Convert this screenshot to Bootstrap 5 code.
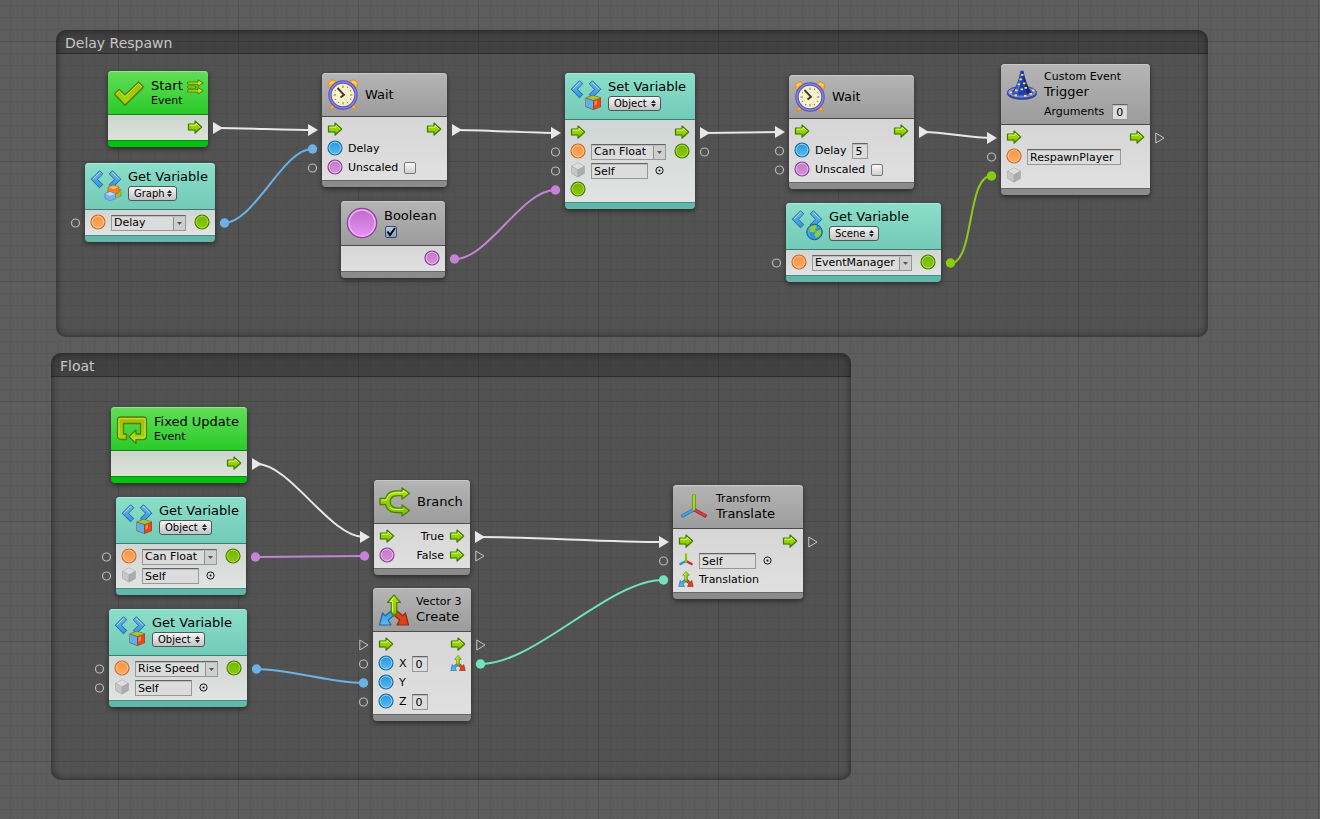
<!DOCTYPE html>
<html lang="en">
<head>
<meta charset="utf-8">
<meta name="viewport" content="width=device-width, initial-scale=1">
<title>Flow graph</title>
<link rel="stylesheet" href="https://cdn.jsdelivr.net/npm/bootstrap@5.3.0/dist/css/bootstrap.min.css">
<style>
  body { font-family: "DejaVu Sans", sans-serif; font-size: 11px; line-height: 16px; color: #000; background: #5d5d5d; }

  /* canvas with a 12px grid and a heavier line every 120px */
  .graph-canvas {
    min-height: 100vh;
    background-color: #5d5d5d;
    background-image:
      linear-gradient(90deg, #515151 1px, transparent 1px),
      linear-gradient(#515151 1px, transparent 1px),
      linear-gradient(90deg, #585858 1px, transparent 1px),
      linear-gradient(#585858 1px, transparent 1px);
    background-size: 120px 120px, 120px 120px, 12px 12px, 12px 12px;
    background-position: 118px 41px, 118px 41px, 10px 5px, 10px 5px;
  }
  .wire-layer { inset: 0; pointer-events: none; }

  .graph-group { border-radius: 10px; background: rgba(0,0,0,.11); box-shadow: inset 0 0 7px 1px rgba(0,0,0,.45); overflow: hidden; }
  .graph-group h2 { height: 24px; padding: 1px 9px 0; font-size: 14px; line-height: 24px; color: #c6c6c6; background: rgba(0,0,0,.2); border-bottom: 1px solid rgba(0,0,0,.3); }
  #g-delay { left: 56px; top: 30px; width: 1152px; height: 307px; }
  #g-float { left: 51px; top: 353px; width: 800px; height: 427px; }

  /* nodes */
  .unit { position: absolute; border: 0; border-radius: 4px; box-shadow: 0 2px 5px rgba(0,0,0,.5); background: none; color: #000;
    --h1: #b5b5b5; --h2: #9c9c9c; --hl: #c9c9c9; --ln: #4b4b4b; --b1: #d6d6d6; --b2: #e0e0e0; --f: #8b8b8b; --fl: #686868; }
  .unit-teal { --h1: #8bdfca; --h2: #73cab8; --hl: #a5ead9; --ln: #3a7d71; --b1: #d0d6d4; --b2: #e0e4e3; --f: #63b6aa; --fl: #468f85; }
  .unit-green { --h1: #62dd58; --h2: #2acb2a; --hl: #8bea83; --ln: #1c7d1c; --b1: #cdd6cd; --b2: #dbe3db; --f: #05c20c; --fl: #07900b; }
  .unit .card-header { min-height: 44px; padding: 0 5px; display: flex; align-items: center; gap: 6px; border: 0; border-bottom: 1px solid var(--ln); border-radius: 4px 4px 0 0;
    background: linear-gradient(var(--h1), var(--h2)); box-shadow: inset 0 1px 0 var(--hl); }
  .unit .card-header.with-scope { min-height: 47px; padding-bottom: 2px; }
  .unit .card-header.with-value { min-height: 45px; }
  .unit .card-header.with-args { min-height: 61px; align-items: flex-start; padding-top: 6px; }
  .unit .card-body { padding: 3px 5px 4px; display: grid; gap: 1px; background: linear-gradient(var(--b1), var(--b2)); }
  .unit .card-footer { height: 7px; padding: 0; border: 0; border-top: 1px solid var(--fl); border-radius: 0 0 4px 4px; background: var(--f); }
  .unit h3 { margin: 0; font-size: 13px; line-height: 16px; font-weight: 400; }
  .unit .sub-title { font-size: 11px; line-height: 14px; margin: 0; }
  .slot { display: flex; align-items: center; gap: 5px; height: 18px; white-space: nowrap; }
  .slot label, .slot span { line-height: 18px; padding-top: 1px; }
  .pin { width: 16px; height: 16px; flex: none; }
  .unit-icon { width: 32px; height: 32px; flex: none; overflow: visible; }
  .multi-icon { width: 17px; height: 16px; }

  .field { height: 16px; margin-top: 2px; padding: 0 2px; border: 1px solid #989898; border-top-color: #636363; border-radius: 0; background: #dcdcdc; box-shadow: inset 0 1px 0 #bdbdbd; font-size: 11px; line-height: 14px; color: #000; }
  .field-digit { width: 16px; padding: 0 3px; }
  .field-self { width: 57px; }
  .field-event { width: 94px; }
  select.field { width: 75px; appearance: none; padding-right: 14px;
    background: url("data:image/svg+xml,%3Csvg xmlns='http://www.w3.org/2000/svg' width='12' height='14'%3E%3Crect width='12' height='14' fill='%23cfcfcf'/%3E%3Crect width='1' height='14' fill='%238f8f8f'/%3E%3Cpath d='M4 6h5L6.500 9z' fill='%23555'/%3E%3C/svg%3E") right top / 12px 14px no-repeat #dcdcdc; }
  select.field-rise { width: 83px; }
  select.field-manager { width: 100px; }
  .scope { height: 15px; width: 53px; margin-top: 1px; padding: 0 0 0 5px; appearance: none; border: 1px solid #4a5b58; border-radius: 3px; font-size: 10px; line-height: 13px; color: #000;
    background: url("data:image/svg+xml,%3Csvg xmlns='http://www.w3.org/2000/svg' width='5' height='7'%3E%3Cpath d='M0 3L2.500 0L5 3zM0 4h5L2.500 7z' fill='%23222'/%3E%3C/svg%3E") right 4px center no-repeat, linear-gradient(#f6f6f6, #c4c4c4); }
  .scope-graph { width: 49px; }
  .scope-scene { width: 50px; }
  .tick { appearance: none; width: 12px; height: 12px; margin: 2px 0 0 1px; border: 1px solid #777; border-radius: 2px; background: linear-gradient(#fafafa, #cfcfcf); }
  .tick:checked { border-color: #3c4c5e; background: url("data:image/svg+xml,%3Csvg xmlns='http://www.w3.org/2000/svg' width='10' height='10'%3E%3Cpath d='M1.500 4.500L4 8L9 1' fill='none' stroke='%23000' stroke-width='2'/%3E%3C/svg%3E") center no-repeat, linear-gradient(#b5cde8, #7fa3cc); }
  .picker { width: 9px; height: 16px; padding: 0; border: 0; background: none; margin-left: 2px; display: flex; align-items: center; }

  #n-start { left: 108px; top: 71px; width: 100px; }
  #n-graphvar { left: 85px; top: 163px; width: 130px; }
  #n-wait-a { left: 322px; top: 73px; width: 125px; }
  #n-bool { left: 341px; top: 201px; width: 104px; }
  #n-setvar { left: 565px; top: 73px; width: 130px; }
  #n-wait-b { left: 789px; top: 75px; width: 125px; }
  #n-scenevar { left: 786px; top: 203px; width: 155px; }
  #n-trigger { left: 1001px; top: 64px; width: 149px; }
  #n-fixed { left: 111px; top: 407px; width: 136px; }
  #n-floatvar { left: 116px; top: 497px; width: 130px; }
  #n-risevar { left: 109px; top: 609px; width: 138px; }
  #n-branch { left: 374px; top: 480px; width: 96px; }
  #n-vector { left: 373px; top: 588px; width: 98px; }
  #n-translate { left: 673px; top: 485px; width: 130px; }
</style>
</head>
<body>

<svg width="0" height="0" class="position-absolute" aria-hidden="true">
  <defs>
    <linearGradient id="lime" x2="0" y2="1"><stop stop-color="#b4e000"/><stop offset="1" stop-color="#7fc400"/></linearGradient>
    <linearGradient id="olive" x2="0" y2="1"><stop stop-color="#a5b80a"/><stop offset="1" stop-color="#9ee000"/></linearGradient>
    <linearGradient id="blue" x2="0" y2="1"><stop stop-color="#2496dd"/><stop offset="1" stop-color="#5dbcf0"/></linearGradient>
    <linearGradient id="pink" x2="0" y2="1"><stop stop-color="#c07ac4"/><stop offset="1" stop-color="#d793dc"/></linearGradient>
    <linearGradient id="violet" x2="0" y2="1"><stop stop-color="#bd6bcb"/><stop offset="1" stop-color="#e893f5"/></linearGradient>
    <linearGradient id="orange" x2="0" y2="1"><stop stop-color="#ff9240"/><stop offset="1" stop-color="#ffab62"/></linearGradient>
    <linearGradient id="leaf" x2="0" y2="1"><stop stop-color="#72b300"/><stop offset="1" stop-color="#8ccb0a"/></linearGradient>
    <linearGradient id="sky" x2="0" y2="1"><stop stop-color="#6fbcf0"/><stop offset="1" stop-color="#2e93dc"/></linearGradient>

    <symbol id="i-flow" viewBox="0 0 16 16"><path d="M1.500 5.500H8V2.500L15 8L8 14.200V10.800H1.500Z" fill="#000" opacity=".15" transform="translate(0 1)"/><path d="M1.500 5H8V2L14.700 8L8 14V11H1.500Z" fill="url(#lime)" stroke="#3c7d00" stroke-width="1.200" stroke-linejoin="round"/><path d="M2.600 6.200H9V4.300L12.800 7.800" fill="none" stroke="#e0f58a" stroke-width=".9"/></symbol>
    <symbol id="i-blue" viewBox="0 0 16 16"><circle cx="8" cy="8" r="7" fill="url(#blue)" stroke="#1b6a9c" stroke-width="1.200"/><circle cx="8" cy="8" r="5.800" fill="none" stroke="#86cff5" stroke-width="1"/></symbol>
    <symbol id="i-pink" viewBox="0 0 16 16"><circle cx="8" cy="8" r="7" fill="url(#pink)" stroke="#8a3f99" stroke-width="1.200"/><circle cx="8" cy="8" r="5.800" fill="none" stroke="#eab4ee" stroke-width="1"/></symbol>
    <symbol id="i-orange" viewBox="0 0 16 16"><circle cx="8" cy="8" r="7" fill="url(#orange)" stroke="#c9692c" stroke-width="1.200"/><circle cx="8" cy="8" r="5.800" fill="none" stroke="#ffc592" stroke-width="1"/></symbol>
    <symbol id="i-leaf" viewBox="0 0 16 16"><circle cx="8" cy="8" r="7" fill="url(#leaf)" stroke="#467c00" stroke-width="1.200"/><circle cx="8" cy="8" r="5.800" fill="none" stroke="#a9dc3c" stroke-width="1"/></symbol>
    <symbol id="i-cube" viewBox="0 0 16 16"><path d="M8 .5L14.700 4V11.500L8 15.500L1.300 11.500V4Z" fill="#a3a3a3"/><path d="M8 1L14 4L8 7.500L2 4Z" fill="#dedede"/><path d="M1.800 4.600L7.700 7.800V14.800L1.800 11.300Z" fill="#c6c6c6"/><path d="M14.200 4.600L8.300 7.800V14.800L14.200 11.300Z" fill="#acacac"/></symbol>
    <symbol id="i-axes" viewBox="0 0 16 16"><path d="M8 9L1.500 12.500" stroke="#2b8fd2" stroke-width="2.200"/><path d="M8 9L14.500 12.500" stroke="#d3232b" stroke-width="2.200"/><path d="M8 10V1.500" stroke="#86c800" stroke-width="2.200"/></symbol>
    <symbol id="i-axes-lg" viewBox="0 0 32 32"><path d="M16 18.500L3.500 25.500" stroke="#256d9e" stroke-width="3.400"/><path d="M16 18.500L28.500 25.500" stroke="#952024" stroke-width="3.400"/><path d="M16 19V3.500" stroke="#5c8c0a" stroke-width="3.400"/><path d="M16 18.500L4 25" stroke="#41a4e3" stroke-width="2"/><path d="M16 18.500L28 25" stroke="#dc3b40" stroke-width="2"/><path d="M16 19V4" stroke="#9fdc10" stroke-width="2"/></symbol>
    <symbol id="i-vector" viewBox="0 0 32 32">
      <path d="M13.500 16.500L7.300 21.800L4.500 19L1.500 31H13L10.300 26L17.500 20Z" fill="url(#blue)" stroke="#2a6597" stroke-width="1.200" stroke-linejoin="round"/>
      <path d="M18.500 16.500L24.700 21.800L27.500 19L30.500 31H19L21.700 26L14.500 20Z" fill="#dc441c" stroke="#8f2a12" stroke-width="1.200" stroke-linejoin="round"/>
      <path d="M13.200 19V8.500H9.500L16 .8L22.500 8.500H18.800V19L16 21.500Z" fill="url(#lime)" stroke="#4b8205" stroke-width="1.200" stroke-linejoin="round"/><path d="M14.600 18V7.500H12.500L16 3" fill="none" stroke="#e3f58e" stroke-width="1"/></symbol>
    <symbol id="i-check" viewBox="0 0 32 32"><path d="M1.500 17.500L6.300 13L12 18.500L25.500 5.500L30.500 10.500L12 28.500Z" fill="#000" opacity=".2" transform="translate(0 1)"/><path d="M1.500 17L6.300 12.500L12 18L25.500 5L30.500 10L12 28Z" fill="url(#olive)" stroke="#5c7d05" stroke-width="1.300" stroke-linejoin="round"/><path d="M3.200 17L6.300 14.200L12 19.700L25.500 6.700L28.800 10" fill="none" stroke="#cfe04a" stroke-width="1"/></symbol>
    <symbol id="i-loop" viewBox="0 0 32 32"><path d="M1.500 7Q1.500 4 4.500 4H27.500Q30.500 4 30.500 7V23.500Q30.500 26.500 27.500 26.500H20V30.500L13 23.700L20 17V21H24.500V10.500H7.500V21H10.500V26.500H5Q1.500 26.500 1.500 23Z" fill="url(#olive)" stroke="#4f7f04" stroke-width="1.300" stroke-linejoin="round"/><path d="M3 24V5.700H29V23.500Q28.500 25 27 25H18.500V27L15 23.700L18.500 20" fill="none" stroke="#d2dd55" stroke-width="1"/></symbol>
    <symbol id="i-multi" viewBox="0 0 17 16"><g fill="#c8ea1c" stroke="#4a8000" stroke-width="1" stroke-linejoin="round"><path d="M.7 3H11V.8L16.200 4L11 7.200V5.200H.7Z"/><path d="M.7 10.800H11V8.600L16.200 11.800L11 15V13H.7Z"/><path d="M.7 7H9V9H.7Z"/></g></symbol>
    <symbol id="i-branch" viewBox="0 0 32 32"><path d="M1 12.500H6.500C8.500 6 12.500 4.500 23 5V1.800L30.500 7.500L23 13V9.700C15 9.300 12 10 11 15.500C12 21.500 15 22.500 23 22V19L30.500 24.500L23 30V26.700C12.500 27.200 8.500 25.500 6.500 18.500H1Z" fill="url(#lime)" stroke="#4a8300" stroke-width="1.300" stroke-linejoin="round"/><path d="M2.300 14H7.500C9 8 12.500 6.300 24.300 6.500V4.600L28.300 7.500M11 21C13 24 16 23.500 24.300 23.400" fill="none" stroke="#dcf57c" stroke-width="1"/></symbol>
    <symbol id="i-ball" viewBox="0 0 32 32"><circle cx="16" cy="16" r="14.600" fill="url(#violet)" stroke="#8b459b" stroke-width="1.400"/><circle cx="16" cy="16" r="13" fill="none" stroke="#f5b0fc" stroke-width="1.400"/></symbol>
    <symbol id="i-clock" viewBox="0 0 32 32">
      <g fill="#f9b233" stroke="#d98412" stroke-width=".7"><circle cx="5.800" cy="5.500" r="4.600"/><circle cx="26.200" cy="5.500" r="4.600"/><path d="M5.500 24L2.300 30.500L9.500 28Z"/><path d="M26.500 24L29.700 30.500L22.500 28Z"/></g>
      <path d="M3 5Q4 2.500 6.500 3M25 3Q28 2.500 29 5" fill="none" stroke="#fee08a" stroke-width="1.300"/>
      <circle cx="16" cy="16" r="13" fill="#fbf1c6" stroke="#5550b4" stroke-width="3.400"/><circle cx="16" cy="16" r="13" fill="none" stroke="#8581e8" stroke-width="1.500"/>
      <path d="M16 6.500V9M16 23V25.500M6.500 16H9M23 16H25.500M20.700 7.800L20 9M24.200 11.300L23 12M24.200 20.700L23 20M20.700 24.200L20 23M11.300 24.200L12 23M7.800 20.700L9 20M7.800 11.300L9 12" stroke="#666" stroke-width=".9"/>
      <path d="M10.500 9L17 15.800L13.500 18.600" fill="none" stroke="#3c3c34" stroke-width="1.900"/></symbol>
    <symbol id="i-hat" viewBox="0 0 32 32"><ellipse cx="16" cy="23.500" rx="15" ry="6.300" fill="#32419c"/><ellipse cx="16" cy="22.300" rx="14.500" ry="5.800" fill="#7f8ddb" stroke="#3a479e"/><ellipse cx="16" cy="22.500" rx="11.500" ry="3.800" fill="#4d5fc4"/>
      <path d="M6.500 22Q12 15 14.500 .8H17.500Q20 15 25.500 22Q16 28 6.500 22Z" fill="#1d3bb4"/><path d="M15 2Q15.500 15 11.500 24.300L7.500 22Q13 15 15 2Z" fill="#4366d6"/><path d="M17 2Q20 15 25 22L21 24.200Q18 15 17 2Z" fill="#142676"/>
      <g fill="#f4e93a"><path d="M15 4h2.500v1.800H15zM13.500 8.500H16v1.800h-2.500zM17 12.500h2.500v1.800H17zM11.500 13.500H14v1.800h-2.500zM18.500 17H21v1.800h-2.500zM14.500 18.500H17v1.800h-2.500zM9 19.500h2.500v1.800H9zM26 19.500h2.500v1.800H26zM3.500 21.500H6v1.800H3.500zM18 25h2.500v1.800H18zM23.500 23H26v1.800h-2.500zM8.500 24.500H11v1.800H8.500z"/></g></symbol>
    <symbol id="i-code" viewBox="0 0 32 32"><g stroke="#2568a5" stroke-width="1" stroke-linejoin="round" fill="url(#sky)"><path d="M9.500 1.800L12.800 4.800L7.400 10.200L12.800 15.600L9.500 18.800L1.200 10.200Z"/><path d="M22.500 1.800L19.200 4.800L24.600 10.200L19.200 15.600L22.500 18.800L30.800 10.200Z"/></g><path d="M9.700 3.300L2.900 10.200M22.300 3.300L29.100 10.200" stroke="#b5def8" stroke-width=".9"/></symbol>
    <symbol id="i-objvar" viewBox="0 0 32 32"><use href="#i-code"/><path d="M15.500 18.500L23 16L31 18.500V28L23.500 31L15.500 28Z" fill="#8e4a2a"/><path d="M16 18.800L23 16.500L30.500 18.800L23.500 21.300Z" fill="#9cc83a"/><path d="M16 19.500L23 21.800V30.300L16 27.600Z" fill="#5cb0f0"/><path d="M30.500 19.500L24 21.800V30.300L30.500 27.600Z" fill="#e8481a"/><path d="M24.500 22.200L27 21.300V25L24.500 27Z" fill="#f98a4e"/></symbol>
    <symbol id="i-graphvar" viewBox="0 0 32 32"><use href="#i-code"/><path d="M24 22L31 20.500V27L24 29.500Z" fill="#9cc03a" stroke="#6f8c1a" stroke-width=".6"/><path d="M18 18L23.500 16L29 18V23.500L23.500 26L18 23.500Z" fill="#f5801c" stroke="#b85b10" stroke-width=".7"/><path d="M18.500 18.300L23.500 16.500L28.500 18.300L23.500 20.300Z" fill="#fdb766"/><path d="M15 24.500L20 22.500L25.500 24.500V29.500L20.300 31.800L15 29.500Z" fill="#7cb3ef" stroke="#4a7ec0" stroke-width=".7"/><path d="M15.500 24.800L20 23.100L25 24.800L20.300 26.700Z" fill="#bcdcfb"/></symbol>
    <symbol id="i-scenevar" viewBox="0 0 32 32"><use href="#i-code"/><circle cx="23.500" cy="23" r="7.800" fill="#2f93dd" stroke="#1d5f9c" stroke-width="1"/><path d="M18 19Q21 15.500 25 16.300L26 19L23.500 20L25 22L22 23.500L19 22.500Z" fill="#93cf2c"/><path d="M25 22.500L29.500 20.500Q31 24 28.500 27L25 29L23.500 25.500Z" fill="#93cf2c"/><path d="M18 24Q19 21 17.500 20.500Q16.500 25 19.500 28Z" fill="#6cc2f4"/></symbol>

    <symbol id="p-tri" viewBox="0 0 10 12" overflow="visible"><path d="M0 0L10 6L0 12Z" fill="#e8e8e8"/></symbol>
    <symbol id="p-tri-open" viewBox="0 0 10 12" overflow="visible"><path d="M.8 1L9 6L.8 11Z" fill="none" stroke="#c4c4c4" stroke-width="1"/></symbol>
    <symbol id="s-picker" viewBox="0 0 9 9"><circle cx="4.500" cy="4.500" r="3.600" fill="none" stroke="#111" stroke-width="1"/><circle cx="4.500" cy="4.500" r="1" fill="#000"/></symbol>
  </defs>
</svg>

<main class="graph-canvas position-relative overflow-hidden">
  <section class="graph-group position-absolute" id="g-delay"><h2 class="m-0 fw-normal">Delay Respawn</h2></section>
  <section class="graph-group position-absolute" id="g-float"><h2 class="m-0 fw-normal">Float</h2></section>

  <article class="card unit unit-green" id="n-start">
    <header class="card-header"><svg class="unit-icon"><use href="#i-check"/></svg><div><h3>Start</h3><p class="sub-title">Event</p></div><svg class="multi-icon position-absolute top-0 end-0 mt-2 me-1"><use href="#i-multi"/></svg></header>
    <div class="card-body"><div class="slot"><svg class="pin ms-auto"><use href="#i-flow"/></svg></div></div>
    <div class="card-footer"></div>
  </article>

  <article class="card unit unit-teal" id="n-graphvar">
    <header class="card-header with-scope"><svg class="unit-icon"><use href="#i-graphvar"/></svg><div class="d-flex flex-column text-nowrap"><h3>Get Variable</h3><select class="scope scope-graph" aria-label="Scope"><option>Graph</option></select></div></header>
    <div class="card-body"><div class="slot"><svg class="pin"><use href="#i-orange"/></svg><select class="field" aria-label="Variable name"><option>Delay</option></select><svg class="pin ms-auto"><use href="#i-leaf"/></svg></div></div>
    <div class="card-footer"></div>
  </article>

  <article class="card unit" id="n-wait-a">
    <header class="card-header"><svg class="unit-icon"><use href="#i-clock"/></svg><h3>Wait</h3></header>
    <div class="card-body">
      <div class="slot"><svg class="pin"><use href="#i-flow"/></svg><svg class="pin ms-auto"><use href="#i-flow"/></svg></div>
      <div class="slot"><svg class="pin"><use href="#i-blue"/></svg><span>Delay</span></div>
      <div class="slot"><svg class="pin"><use href="#i-pink"/></svg><label for="unscaled-a">Unscaled</label><input class="tick" type="checkbox" id="unscaled-a"></div>
    </div>
    <div class="card-footer"></div>
  </article>

  <article class="card unit" id="n-bool">
    <header class="card-header with-value"><svg class="unit-icon"><use href="#i-ball"/></svg><div class="d-flex flex-column"><h3><label for="bool-value">Boolean</label></h3><input class="tick" type="checkbox" id="bool-value" checked></div></header>
    <div class="card-body"><div class="slot"><svg class="pin ms-auto"><use href="#i-pink"/></svg></div></div>
    <div class="card-footer"></div>
  </article>

  <article class="card unit unit-teal" id="n-setvar">
    <header class="card-header with-scope"><svg class="unit-icon"><use href="#i-objvar"/></svg><div class="d-flex flex-column text-nowrap"><h3>Set Variable</h3><select class="scope" aria-label="Scope"><option>Object</option></select></div></header>
    <div class="card-body">
      <div class="slot"><svg class="pin"><use href="#i-flow"/></svg><svg class="pin ms-auto"><use href="#i-flow"/></svg></div>
      <div class="slot"><svg class="pin"><use href="#i-orange"/></svg><select class="field" aria-label="Variable name"><option>Can Float</option></select><svg class="pin ms-auto"><use href="#i-leaf"/></svg></div>
      <div class="slot"><svg class="pin"><use href="#i-cube"/></svg><input class="field field-self" type="text" value="Self" aria-label="Object"><button class="picker" type="button" aria-label="Pick object"><svg width="9" height="9"><use href="#s-picker"/></svg></button></div>
      <div class="slot"><svg class="pin"><use href="#i-leaf"/></svg></div>
    </div>
    <div class="card-footer"></div>
  </article>

  <article class="card unit" id="n-wait-b">
    <header class="card-header"><svg class="unit-icon"><use href="#i-clock"/></svg><h3>Wait</h3></header>
    <div class="card-body">
      <div class="slot"><svg class="pin"><use href="#i-flow"/></svg><svg class="pin ms-auto"><use href="#i-flow"/></svg></div>
      <div class="slot"><svg class="pin"><use href="#i-blue"/></svg><label for="delay-b">Delay</label><input class="field field-digit" type="text" id="delay-b" value="5"></div>
      <div class="slot"><svg class="pin"><use href="#i-pink"/></svg><label for="unscaled-b">Unscaled</label><input class="tick" type="checkbox" id="unscaled-b"></div>
    </div>
    <div class="card-footer"></div>
  </article>

  <article class="card unit unit-teal" id="n-scenevar">
    <header class="card-header with-scope"><svg class="unit-icon"><use href="#i-scenevar"/></svg><div class="d-flex flex-column text-nowrap"><h3>Get Variable</h3><select class="scope scope-scene" aria-label="Scope"><option>Scene</option></select></div></header>
    <div class="card-body"><div class="slot"><svg class="pin"><use href="#i-orange"/></svg><select class="field field-manager" aria-label="Variable name"><option>EventManager</option></select><svg class="pin ms-auto"><use href="#i-leaf"/></svg></div></div>
    <div class="card-footer"></div>
  </article>

  <article class="card unit" id="n-trigger">
    <header class="card-header with-args"><svg class="unit-icon"><use href="#i-hat"/></svg><div class="text-nowrap"><p class="sub-title">Custom Event</p><h3>Trigger</h3><div class="d-flex gap-2 mt-1"><label for="arg-count">Arguments</label><input class="field field-digit mt-0" type="text" id="arg-count" value="0"></div></div></header>
    <div class="card-body">
      <div class="slot"><svg class="pin"><use href="#i-flow"/></svg><svg class="pin ms-auto"><use href="#i-flow"/></svg></div>
      <div class="slot"><svg class="pin"><use href="#i-orange"/></svg><input class="field field-event" type="text" value="RespawnPlayer" aria-label="Event name"></div>
      <div class="slot"><svg class="pin"><use href="#i-cube"/></svg></div>
    </div>
    <div class="card-footer"></div>
  </article>

  <article class="card unit unit-green" id="n-fixed">
    <header class="card-header"><svg class="unit-icon"><use href="#i-loop"/></svg><div class="text-nowrap"><h3>Fixed Update</h3><p class="sub-title">Event</p></div></header>
    <div class="card-body"><div class="slot"><svg class="pin ms-auto"><use href="#i-flow"/></svg></div></div>
    <div class="card-footer"></div>
  </article>

  <article class="card unit unit-teal" id="n-floatvar">
    <header class="card-header with-scope"><svg class="unit-icon"><use href="#i-objvar"/></svg><div class="d-flex flex-column text-nowrap"><h3>Get Variable</h3><select class="scope" aria-label="Scope"><option>Object</option></select></div></header>
    <div class="card-body">
      <div class="slot"><svg class="pin"><use href="#i-orange"/></svg><select class="field" aria-label="Variable name"><option>Can Float</option></select><svg class="pin ms-auto"><use href="#i-leaf"/></svg></div>
      <div class="slot"><svg class="pin"><use href="#i-cube"/></svg><input class="field field-self" type="text" value="Self" aria-label="Object"><button class="picker" type="button" aria-label="Pick object"><svg width="9" height="9"><use href="#s-picker"/></svg></button></div>
    </div>
    <div class="card-footer"></div>
  </article>

  <article class="card unit unit-teal" id="n-risevar">
    <header class="card-header with-scope"><svg class="unit-icon"><use href="#i-objvar"/></svg><div class="d-flex flex-column text-nowrap"><h3>Get Variable</h3><select class="scope" aria-label="Scope"><option>Object</option></select></div></header>
    <div class="card-body">
      <div class="slot"><svg class="pin"><use href="#i-orange"/></svg><select class="field field-rise" aria-label="Variable name"><option>Rise Speed</option></select><svg class="pin ms-auto"><use href="#i-leaf"/></svg></div>
      <div class="slot"><svg class="pin"><use href="#i-cube"/></svg><input class="field field-self" type="text" value="Self" aria-label="Object"><button class="picker" type="button" aria-label="Pick object"><svg width="9" height="9"><use href="#s-picker"/></svg></button></div>
    </div>
    <div class="card-footer"></div>
  </article>

  <article class="card unit" id="n-branch">
    <header class="card-header"><svg class="unit-icon"><use href="#i-branch"/></svg><h3>Branch</h3></header>
    <div class="card-body">
      <div class="slot"><svg class="pin"><use href="#i-flow"/></svg><span class="ms-auto">True</span><svg class="pin"><use href="#i-flow"/></svg></div>
      <div class="slot"><svg class="pin"><use href="#i-pink"/></svg><span class="ms-auto">False</span><svg class="pin"><use href="#i-flow"/></svg></div>
    </div>
    <div class="card-footer"></div>
  </article>

  <article class="card unit" id="n-vector">
    <header class="card-header"><svg class="unit-icon"><use href="#i-vector"/></svg><div class="text-nowrap"><p class="sub-title">Vector 3</p><h3>Create</h3></div></header>
    <div class="card-body">
      <div class="slot"><svg class="pin"><use href="#i-flow"/></svg><svg class="pin ms-auto"><use href="#i-flow"/></svg></div>
      <div class="slot"><svg class="pin"><use href="#i-blue"/></svg><label for="vec-x">X</label><input class="field field-digit" type="text" id="vec-x" value="0"><svg class="pin ms-auto"><use href="#i-vector"/></svg></div>
      <div class="slot"><svg class="pin"><use href="#i-blue"/></svg><span>Y</span></div>
      <div class="slot"><svg class="pin"><use href="#i-blue"/></svg><label for="vec-z">Z</label><input class="field field-digit" type="text" id="vec-z" value="0"></div>
    </div>
    <div class="card-footer"></div>
  </article>

  <article class="card unit" id="n-translate">
    <header class="card-header"><svg class="unit-icon"><use href="#i-axes-lg"/></svg><div class="text-nowrap"><p class="sub-title">Transform</p><h3>Translate</h3></div></header>
    <div class="card-body">
      <div class="slot"><svg class="pin"><use href="#i-flow"/></svg><svg class="pin ms-auto"><use href="#i-flow"/></svg></div>
      <div class="slot"><svg class="pin"><use href="#i-axes"/></svg><input class="field field-self" type="text" value="Self" aria-label="Target"><button class="picker" type="button" aria-label="Pick target"><svg width="9" height="9"><use href="#s-picker"/></svg></button></div>
      <div class="slot"><svg class="pin"><use href="#i-vector"/></svg><span>Translation</span></div>
    </div>
    <div class="card-footer"></div>
  </article>

  <!-- connections and ports -->
  <svg class="wire-layer position-absolute w-100 h-100" aria-hidden="true">
    <g fill="none" stroke-width="2">
      <g stroke="#e8e8e8">
        <path d="M218 128C240 128 290 130 312 130"/><path d="M457 130C480 130 532 133 556 133"/><path d="M705 133L780 132"/><path d="M924 132C945 132 970 138 992 138"/>
        <path d="M257 464C290 464 330 537 364 537"/><path d="M480 537C530 537 610 542 664 542"/>
      </g>
      <path d="M224 223C254 223 283 149 312 149" stroke="#6bb3e6"/>
      <path d="M256 669C290 669 330 683 363 683" stroke="#6bb3e6"/>
      <path d="M455 259C488 259 522 190 555 190" stroke="#c583d6"/>
      <path d="M256 557L364 556" stroke="#c583d6"/>
      <path d="M951 263C974 263 967 176 991 176" stroke="#8ccb14"/>
      <path d="M481 664C535 664 609 580 663 580" stroke="#70e3be"/>
    </g>
    <g>
      <use href="#p-tri" x="213" y="122" width="10" height="12"/><use href="#p-tri" x="308" y="124" width="10" height="12"/>
      <use href="#p-tri" x="452" y="124" width="10" height="12"/><use href="#p-tri" x="551" y="127" width="10" height="12"/>
      <use href="#p-tri" x="700" y="127" width="10" height="12"/><use href="#p-tri" x="775" y="126" width="10" height="12"/>
      <use href="#p-tri" x="919" y="126" width="10" height="12"/><use href="#p-tri" x="987" y="132" width="10" height="12"/>
      <use href="#p-tri" x="252" y="458" width="10" height="12"/><use href="#p-tri" x="360" y="531" width="10" height="12"/>
      <use href="#p-tri" x="475" y="531" width="10" height="12"/><use href="#p-tri" x="659" y="536" width="10" height="12"/>
      <use href="#p-tri-open" x="1155" y="132" width="10" height="12"/><use href="#p-tri-open" x="475" y="550" width="10" height="12"/>
      <use href="#p-tri-open" x="359" y="639" width="10" height="12"/><use href="#p-tri-open" x="476" y="639" width="10" height="12"/>
      <use href="#p-tri-open" x="808" y="536" width="10" height="12"/>
    </g>
    <g fill="#6bb3e6"><circle cx="224.500" cy="223" r="4.700"/><circle cx="312.500" cy="149" r="4.700"/><circle cx="256.500" cy="669" r="4.700"/><circle cx="363.500" cy="683" r="4.700"/></g>
    <g fill="#c583d6"><circle cx="454.500" cy="259" r="4.700"/><circle cx="555.500" cy="190" r="4.700"/><circle cx="255.500" cy="557" r="4.700"/><circle cx="364.500" cy="556" r="4.700"/></g>
    <g fill="#8ccb14"><circle cx="950.500" cy="263" r="4.700"/><circle cx="991.500" cy="176" r="4.700"/></g>
    <g fill="#70e3be"><circle cx="480.500" cy="664" r="4.700"/><circle cx="663.500" cy="580" r="4.700"/></g>
    <g fill="none" stroke="#b9b9b9" stroke-width="1.200">
      <circle cx="75.500" cy="223" r="4"/><circle cx="312.500" cy="168" r="4"/><circle cx="555.500" cy="152" r="4"/><circle cx="555.500" cy="171" r="4"/><circle cx="704.500" cy="152" r="4"/>
      <circle cx="779.500" cy="151" r="4"/><circle cx="779.500" cy="170" r="4"/><circle cx="776.500" cy="263" r="4"/><circle cx="991.500" cy="157" r="4"/>
      <circle cx="106.500" cy="557" r="4"/><circle cx="106.500" cy="576" r="4"/><circle cx="99.500" cy="669" r="4"/><circle cx="99.500" cy="688" r="4"/>
      <circle cx="363.500" cy="664" r="4"/><circle cx="363.500" cy="702" r="4"/><circle cx="663.500" cy="561" r="4"/>
    </g>
  </svg>
</main>
<script src="https://cdn.jsdelivr.net/npm/bootstrap@5.3.0/dist/js/bootstrap.bundle.min.js"></script>
</body>
</html>
